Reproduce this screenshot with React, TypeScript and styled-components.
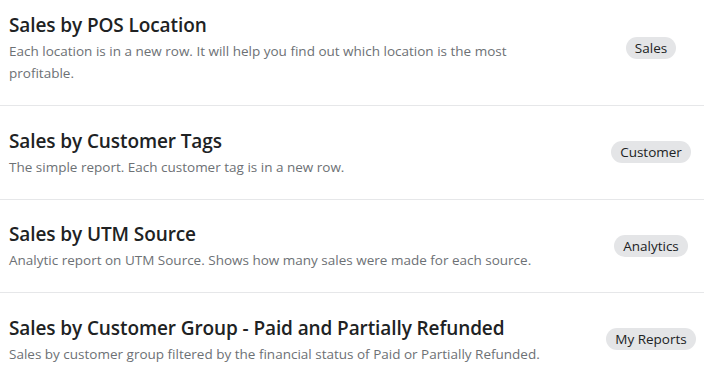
import styled, { createGlobalStyle } from 'styled-components';

const GlobalStyle = createGlobalStyle`
  html, body {
    margin: 0;
    padding: 0;
    background: #ffffff;
  }
  body {
    font-family: "Open Sans", "Noto Sans", sans-serif;
    color: #202223;
    -webkit-font-smoothing: antialiased;
  }
`;

type Report = {
  title: string;
  description: string;
  tag: string;
};

const reports: Report[] = [
  {
    title: 'Sales by POS Location',
    description:
      'Each location is in a new row. It will help you find out which location is the most profitable.',
    tag: 'Sales',
  },
  {
    title: 'Sales by Customer Tags',
    description: 'The simple report. Each customer tag is in a new row.',
    tag: 'Customer',
  },
  {
    title: 'Sales by UTM Source',
    description: 'Analytic report on UTM Source. Shows how many sales were made for each source.',
    tag: 'Analytics',
  },
  {
    title: 'Sales by Customer Group - Paid and Partially Refunded',
    description:
      'Sales by customer group filtered by the financial status of Paid or Partially Refunded.',
    tag: 'My Reports',
  },
];

export default function App() {
  return (
    <>
      <GlobalStyle />
      <List>
        {reports.map((r) => (
          <Row key={r.title}>
            <Info>
              <Title>{r.title}</Title>
              <Description>{r.description}</Description>
            </Info>
            <TagCell>
              <Tag>{r.tag}</Tag>
            </TagCell>
          </Row>
        ))}
      </List>
    </>
  );
}

// the list is scrolled a little, so the first row's top padding is cut off
const List = styled.div`
  width: 704px;
  margin-top: -9.5px;
`;

const Row = styled.div`
  display: flex;
  align-items: center;
  padding: 20.5px 0 21px 9px;
  border-bottom: 1px solid #e6e7e9;

  &:last-child {
    border-bottom: none;
  }
`;

const Info = styled.div`
  flex: 1;
  min-width: 0;
  padding-right: 32px;
`;

const Title = styled.div`
  font-size: 19px;
  font-weight: 600;
  line-height: 28px;
  color: #202223;
  letter-spacing: -0.1px;
`;

const Description = styled.div`
  margin-top: 1px;
  font-size: 13.5px;
  line-height: 22px;
  color: #6d7175;
`;

const TagCell = styled.div`
  width: 106px;
  flex-shrink: 0;
  display: flex;
  justify-content: center;
`;

const Tag = styled.span`
  display: inline-block;
  padding: 0 9px;
  height: 22px;
  line-height: 22px;
  border-radius: 11px;
  background: #e4e5e7;
  color: #202223;
  font-size: 13.5px;
  white-space: nowrap;
`;
